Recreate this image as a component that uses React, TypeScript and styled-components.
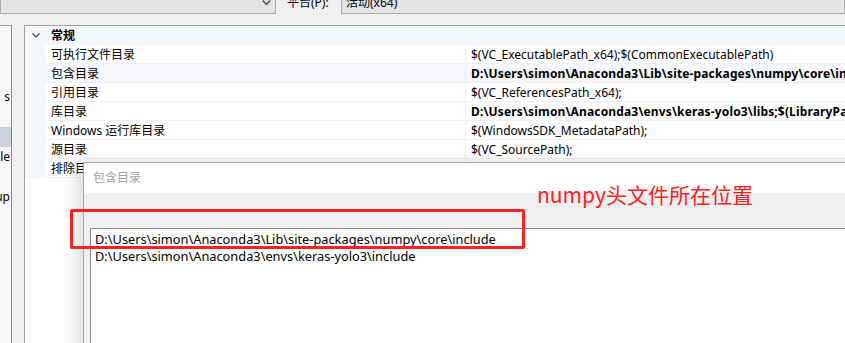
import React from "react";
import styled, { createGlobalStyle } from "styled-components";

const Global = createGlobalStyle`
  html, body { margin: 0; padding: 0; background: #f0f0f0; }
  body { font-family: "Segoe UI", "Noto Sans", "Noto Sans CJK SC", sans-serif; font-size: 12px; color: #000; }
`;

const UI = `"Segoe UI", "Noto Sans", "Noto Sans CJK SC", sans-serif`;

const Page = styled.div`
  position: relative;
  width: 845px;
  height: 343px;
  overflow: hidden;
  background: #f0f0f0;
  font-family: ${UI};
  font-size: 12px;
`;

const TopBar = styled.div`
  display: flex;
  align-items: center;
  height: 23px;
  margin-top: -9px;
`;

const Combo = styled.div<{ $w?: number }>`
  box-sizing: border-box;
  height: 23px;
  ${(p) => (p.$w ? `width: ${p.$w}px;` : "flex: 1;")}
  background: #e4e4e4;
  border: 1px solid #adadad;
  display: flex;
  align-items: center;
  padding: 0 4px;
  white-space: nowrap;
  overflow: hidden;
`;

const ComboText = styled.span`
  flex: 1;
  line-height: 21px;
`;

const Label = styled.span`
  padding: 0 10px 0 11px;
  width: 44px;
  line-height: 23px;
  white-space: nowrap;
`;

const Main = styled.div`
  display: flex;
  margin-top: 11px;
  height: 318px;
`;

const Tree = styled.div`
  box-sizing: border-box;
  width: 12px;
  border-top: 1px solid #a0a0a0;
  border-right: 1px solid #8c8c8c;
  background: #f7f7f7;
  padding-top: 1px;
  overflow: hidden;
`;

const TreeItem = styled.div<{ $sel?: boolean }>`
  height: 20px;
  line-height: 20px;
  white-space: nowrap;
  background: ${(p) => (p.$sel ? "#cccedb" : "transparent")};
  display: flex;
  justify-content: flex-end;
  padding-right: ${(p) => (p.$sel ? 0 : 1)}px;
`;

const Spacer = styled.div`
  width: 12px;
`;

const Grid = styled.div`
  flex: 1;
  border-top: 1px solid #a0a0a0;
  border-left: 1px solid #a0a0a0;
  background: #fff;
  overflow: hidden;
`;

const GridRow = styled.div<{ $tint?: boolean; $header?: boolean }>`
  display: flex;
  height: 19px;
  line-height: 20px;
  box-sizing: border-box;
  background: ${(p) => (p.$header ? "#f3f6fb" : p.$tint ? "#f5f7fa" : "#fff")};
`;

const Gutter = styled.div`
  width: 21px;
  flex: none;
  background: #f3f6fb;
  display: flex;
  align-items: center;
  justify-content: center;
`;

const NameCell = styled.div`
  width: 420px;
  flex: none;
  box-sizing: border-box;
  padding-left: 5px;
  border-bottom: 1px solid #eef1f6;
  border-right: 1px solid #eef1f6;
  white-space: nowrap;
`;

const HeaderCell = styled.div`
  flex: 1;
  padding-left: 5px;
  font-weight: 700;
  white-space: nowrap;
`;

const ValueCell = styled.div<{ $bold?: boolean }>`
  flex: 1;
  padding-left: 5px;
  border-bottom: 1px solid #eef1f6;
  white-space: nowrap;
  overflow: hidden;
  font-weight: ${(p) => (p.$bold ? 700 : 400)};
  letter-spacing: ${(p) => (p.$bold ? "0.15px" : "0")};
`;

const Dialog = styled.div`
  position: absolute;
  left: 83px;
  top: 162px;
  right: -20px;
  bottom: -20px;
  border: 1px solid #a9a9a9;
  background: #f0f0f0;
  box-shadow: -6px 0 14px rgba(0, 0, 0, 0.14);
  display: flex;
  flex-direction: column;
`;

const DialogTitle = styled.div`
  height: 30px;
  line-height: 30px;
  padding-left: 9px;
  background: #fff;
  color: #a3a3a3;
`;

const DialogBody = styled.div`
  flex: 1;
  padding: 35px 0 0 6px;
  display: flex;
`;

const ListBox = styled.div`
  flex: 1;
  background: #fff;
  border-top: 1px solid #828790;
  border-left: 1px solid #828790;
  padding: 2px 0 0 4px;
  font-size: 12.8px;
  line-height: 17px;
  white-space: nowrap;
`;

const Highlight = styled.div`
  position: absolute;
  left: 70px;
  top: 209px;
  width: 449px;
  height: 34px;
  border: 3px solid #ff2020;
  border-radius: 2px;
`;

const Note = styled.div`
  position: absolute;
  left: 537px;
  top: 184px;
  font-family: "Noto Sans CJK SC", "Noto Sans", sans-serif;
  font-size: 21px;
  line-height: 21px;
  color: #ff2020;
  white-space: nowrap;
`;

const Chevron = ({ size = 8 }: { size?: number }) => (
  <svg width={size} height={size / 2 + 1} viewBox="0 0 8 5" fill="none">
    <path d="M0.5 0.5 L4 4 L7.5 0.5" stroke="#444" strokeWidth="1.2" />
  </svg>
);

const rows: { name: string; value: string; bold?: boolean; tint?: boolean }[] = [
  { name: "可执行文件目录", value: "$(VC_ExecutablePath_x64);$(CommonExecutablePath)" },
  {
    name: "包含目录",
    value: "D:\\Users\\simon\\Anaconda3\\Lib\\site-packages\\numpy\\core\\include;$(IncludePath)",
    bold: true,
    tint: true,
  },
  { name: "引用目录", value: "$(VC_ReferencesPath_x64);" },
  {
    name: "库目录",
    value: "D:\\Users\\simon\\Anaconda3\\envs\\keras-yolo3\\libs;$(LibraryPath_x64)",
    bold: true,
  },
  { name: "Windows 运行库目录", value: "$(WindowsSDK_MetadataPath);" },
  { name: "源目录", value: "$(VC_SourcePath);" },
  { name: "排除目录", value: "$(CommonExcludePath);$(VC_ExecutablePath_x64)" },
];

const treeItems = ["", "", "", "s", "", "", "ile", "", "up", "", ""];

export default function App() {
  return (
    <Page>
      <Global />
      <TopBar>
        <Combo $w={276}>
          <ComboText />
          <Chevron size={9} />
        </Combo>
        <Label>平台(P):</Label>
        <Combo>
          <ComboText>活动(x64)</ComboText>
        </Combo>
      </TopBar>
      <Main>
        <Tree>
          {treeItems.map((t, i) => (
            <TreeItem key={i} $sel={i === 5}>
              {t}
            </TreeItem>
          ))}
        </Tree>
        <Spacer />
        <Grid>
          <GridRow $header>
            <Gutter>
              <Chevron />
            </Gutter>
            <HeaderCell>常规</HeaderCell>
          </GridRow>
          {rows.map((r) => (
            <GridRow key={r.name} $tint={r.tint}>
              <Gutter />
              <NameCell>{r.name}</NameCell>
              <ValueCell $bold={r.bold}>{r.value}</ValueCell>
            </GridRow>
          ))}
        </Grid>
      </Main>
      <Dialog>
        <DialogTitle>包含目录</DialogTitle>
        <DialogBody>
          <ListBox>
            <div>D:\Users\simon\Anaconda3\Lib\site-packages\numpy\core\include</div>
            <div>D:\Users\simon\Anaconda3\envs\keras-yolo3\include</div>
          </ListBox>
        </DialogBody>
      </Dialog>
      <Highlight />
      <Note>numpy头文件所在位置</Note>
    </Page>
  );
}
